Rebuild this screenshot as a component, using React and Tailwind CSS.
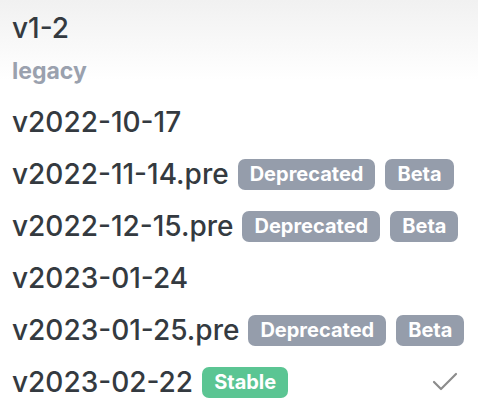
import React from "react";

const rows = [
  { v: "v2022-10-17", tags: [] },
  { v: "v2022-11-14.pre", tags: ["Deprecated", "Beta"] },
  { v: "v2022-12-15.pre", tags: ["Deprecated", "Beta"] },
  { v: "v2023-01-24", tags: [] },
  { v: "v2023-01-25.pre", tags: ["Deprecated", "Beta"] },
  { v: "v2023-02-22", tags: ["Stable"], checked: true },
];

function Badge({ label }) {
  const stable = label === "Stable";
  return (
    <span
      className={
        "inline-flex items-center h-[31px] px-[12px] rounded-[7px] text-[20px] font-bold leading-none text-white " +
        (stable ? "bg-[#5bc593]" : "bg-[#959dab]")
      }
    >
      {label}
    </span>
  );
}

export default function App() {
  return (
    <div
      className="w-[478px] h-[418px] overflow-hidden bg-[linear-gradient(to_bottom,#f1f1f1,#ffffff_80px)] px-3 pt-[2px] text-[#343a40]"
      style={{ fontFamily: "Inter, 'Noto Sans', sans-serif" }}
    >
      <div className="flex items-center h-[52px] text-[28px] font-medium">v1-2</div>
      <div className="h-[42px] pt-[2px] text-[23px] leading-[30px] font-bold text-[#9aa1ae]">legacy</div>
      {rows.map((r) => (
        <div key={r.v} className="flex items-center h-[52px]">
          <span className="text-[28px] font-medium mr-[9px]">{r.v}</span>
          <div className="flex items-center gap-[10px]">
            {r.tags.map((t) => (
              <Badge key={t} label={t} />
            ))}
          </div>
          {r.checked && (
            <svg className="ml-auto mr-[8px]" width="26" height="20" viewBox="0 0 26 20" fill="none">
              <path d="M2 10 L9 17 L24 2" stroke="#8c8c8c" strokeWidth="2.2" strokeLinecap="round" strokeLinejoin="round" />
            </svg>
          )}
        </div>
      ))}
    </div>
  );
}
